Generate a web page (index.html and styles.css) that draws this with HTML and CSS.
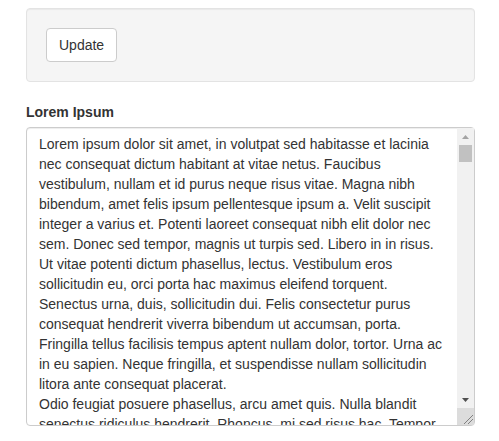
FILE: index.html
```html
<!DOCTYPE html>
<html lang="en">
<head>
<meta charset="utf-8">
<title>Lorem Ipsum</title>
<link rel="stylesheet" href="styles.css">
</head>
<body>
<div class="page">
  <div class="well">
    <button class="btn" type="button">Update</button>
  </div>
  <div class="form-group">
    <label class="control-label" for="lorem">Lorem Ipsum</label>
    <div class="textarea-wrap">
      <textarea id="lorem" class="form-control">
Lorem ipsum dolor sit amet, in volutpat sed habitasse et lacinia nec consequat dictum habitant at vitae netus. Faucibus vestibulum, nullam et id purus neque risus vitae. Magna nibh bibendum, amet felis ipsum pellentesque ipsum a. Velit suscipit integer a varius et. Potenti laoreet consequat nibh elit dolor nec sem. Donec sed tempor, magnis ut turpis sed. Libero in in risus. Ut vitae potenti dictum phasellus, lectus. Vestibulum eros sollicitudin eu, orci porta hac maximus eleifend torquent. Senectus urna, duis, sollicitudin dui. Felis consectetur purus consequat hendrerit viverra bibendum ut accumsan, porta. Fringilla tellus facilisis tempus aptent nullam dolor, tortor. Urna ac in eu sapien. Neque fringilla, et suspendisse nullam sollicitudin litora ante consequat placerat.
Odio feugiat posuere phasellus, arcu amet quis. Nulla blandit senectus ridiculus hendrerit. Rhoncus, mi sed risus hac. Tempor mauris nunc tincidunt, ante quis dolor interdum. Consequat lacus luctus metus, amet aliquet pharetra. Mauris aenean, conubia mollis ac primis, erat vulputate. Nisl ut facilisis ullamcorper, et dictumst ultricies. Cursus vel class, sed non semper ac nostra. Curabitur at dapibus, tempor eget massa condimentum pulvinar.
Tristique sed augue mauris, sit nec platea. Morbi ligula, euismod justo in, amet lobortis. Commodo etiam fermentum risus, vitae magna lacinia vel. Eu pellentesque, ac dui ridiculus quam. Proin est ac, sem ut in elementum. Dignissim sapien, vestibulum blandit odio nibh. Quisque vitae suspendisse, in purus iaculis. Imperdiet urna, litora nulla aenean justo. Sagittis lorem, felis ut rutrum. Hac neque gravida, vivamus tortor in ornare morbi.</textarea>
      <div class="fake-scrollbar" aria-hidden="true">
        <div class="sb-button">
          <svg width="7" height="4" viewBox="0 0 7 4"><polygon points="3.5,0 7,4 0,4" fill="#a3a3a3"/></svg>
        </div>
        <div class="sb-track">
          <div class="sb-thumb"></div>
        </div>
        <div class="sb-button">
          <svg width="7" height="4" viewBox="0 0 7 4"><polygon points="0,0 7,0 3.5,4" fill="#505050"/></svg>
        </div>
        <div class="sb-corner">
          <svg width="17" height="17" viewBox="0 0 17 17"><line x1="7" y1="16" x2="16" y2="7" stroke="#808080" stroke-width="1"/><line x1="11" y1="16" x2="16" y2="11" stroke="#808080" stroke-width="1"/></svg>
        </div>
      </div>
    </div>
  </div>
</div>
</body>
</html>
```

FILE: styles.css
```css
* {
  box-sizing: border-box;
}

html, body {
  margin: 0;
  padding: 0;
  background: #ffffff;
}

body {
  font-family: "Liberation Sans", Arial, Helvetica, sans-serif;
  font-size: 14px;
  line-height: 20px;
  color: #333333;
}

.page {
  padding: 8px 24px 0 26px;
}

.well {
  min-height: 20px;
  padding: 19px;
  margin-bottom: 20px;
  background-color: #f5f5f5;
  border: 1px solid #e3e3e3;
  border-radius: 4px;
  box-shadow: inset 0 1px 1px rgba(0, 0, 0, 0.05);
}

.btn {
  display: inline-block;
  margin: 0;
  padding: 6px 12px;
  font-family: inherit;
  font-size: 14px;
  line-height: 20px;
  color: #333333;
  background-color: #ffffff;
  border: 1px solid #cccccc;
  border-radius: 4px;
  vertical-align: middle;
  cursor: pointer;
}

.form-group {
  margin-bottom: 15px;
}

.control-label {
  display: block;
  margin-bottom: 5px;
  font-weight: bold;
}

.textarea-wrap {
  position: relative;
}

.form-control {
  display: block;
  width: 100%;
  height: 299px;
  margin: 0;
  padding: 6px 29px 6px 12px;
  font-family: inherit;
  font-size: 14px;
  line-height: 20px;
  color: #333333;
  background-color: #ffffff;
  border: 1px solid #cccccc;
  border-radius: 4px;
  box-shadow: inset 0 1px 1px rgba(0, 0, 0, 0.075);
  resize: none;
  overflow: hidden;
}

.fake-scrollbar {
  position: absolute;
  top: 1px;
  right: 1px;
  bottom: 1px;
  width: 17px;
  display: flex;
  flex-direction: column;
  background: #f1f1f1;
  pointer-events: none;
}

.sb-button {
  flex: 0 0 17px;
  display: flex;
  align-items: center;
  justify-content: center;
}

.sb-button svg {
  display: block;
}

.sb-track {
  flex: 1 1 auto;
  padding: 0 2px;
}

.sb-thumb {
  height: 17px;
  background: #c1c1c1;
}

.sb-corner {
  flex: 0 0 17px;
  background: #dcdcdc;
}

.sb-corner svg {
  display: block;
}
```
